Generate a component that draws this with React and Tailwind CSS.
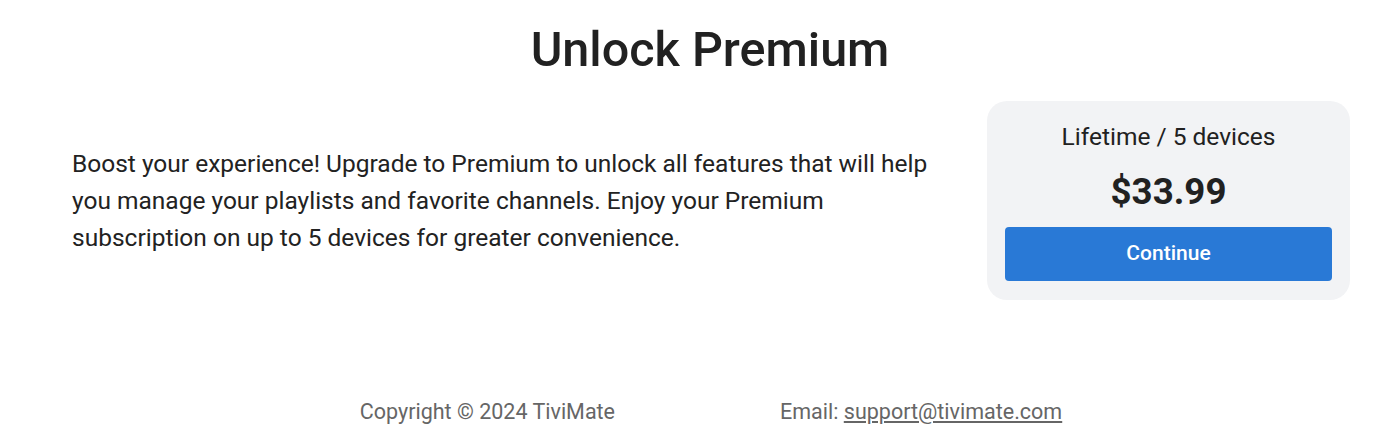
export default function App() {
  return (
    <div className="w-[1396px] h-[435px] bg-white text-[#212121]" style={{ fontFamily: "Roboto, 'Noto Sans', sans-serif" }}>
      <h1 className="text-center text-[48.5px] font-medium leading-none pt-[26px] pl-[24px]">Unlock Premium</h1>
      <div className="flex items-center justify-between pl-[72px] pr-[46px] mt-[26px]">
        <p className="w-[868px] text-[24.5px] leading-[37px] text-[#222]">
          Boost your experience! Upgrade to Premium to unlock all features that will help you manage your playlists and favorite channels. Enjoy your Premium subscription on up to 5 devices for greater convenience.
        </p>
        <div className="w-[363px] h-[199px] rounded-[20px] bg-[#f2f3f5] flex flex-col items-center pt-[22px] px-[18px]">
          <div className="text-[24.5px] leading-[28px]">Lifetime / 5 devices</div>
          <div className="text-[36.7px] font-bold leading-[42px] mt-[20px]">$33.99</div>
          <button className="mt-[14px] w-full h-[54px] rounded-[4px] bg-[#2979d6] text-white text-[21px] font-medium">Continue</button>
        </div>
      </div>
      <div className="flex justify-center gap-[165px] mt-[98px] text-[21.5px] leading-[28px] text-[#666] pl-[26px]">
        <span>Copyright © 2024 TiviMate</span>
        <span>Email: <a className="underline" href="#">support@tivimate.com</a></span>
      </div>
    </div>
  );
}
